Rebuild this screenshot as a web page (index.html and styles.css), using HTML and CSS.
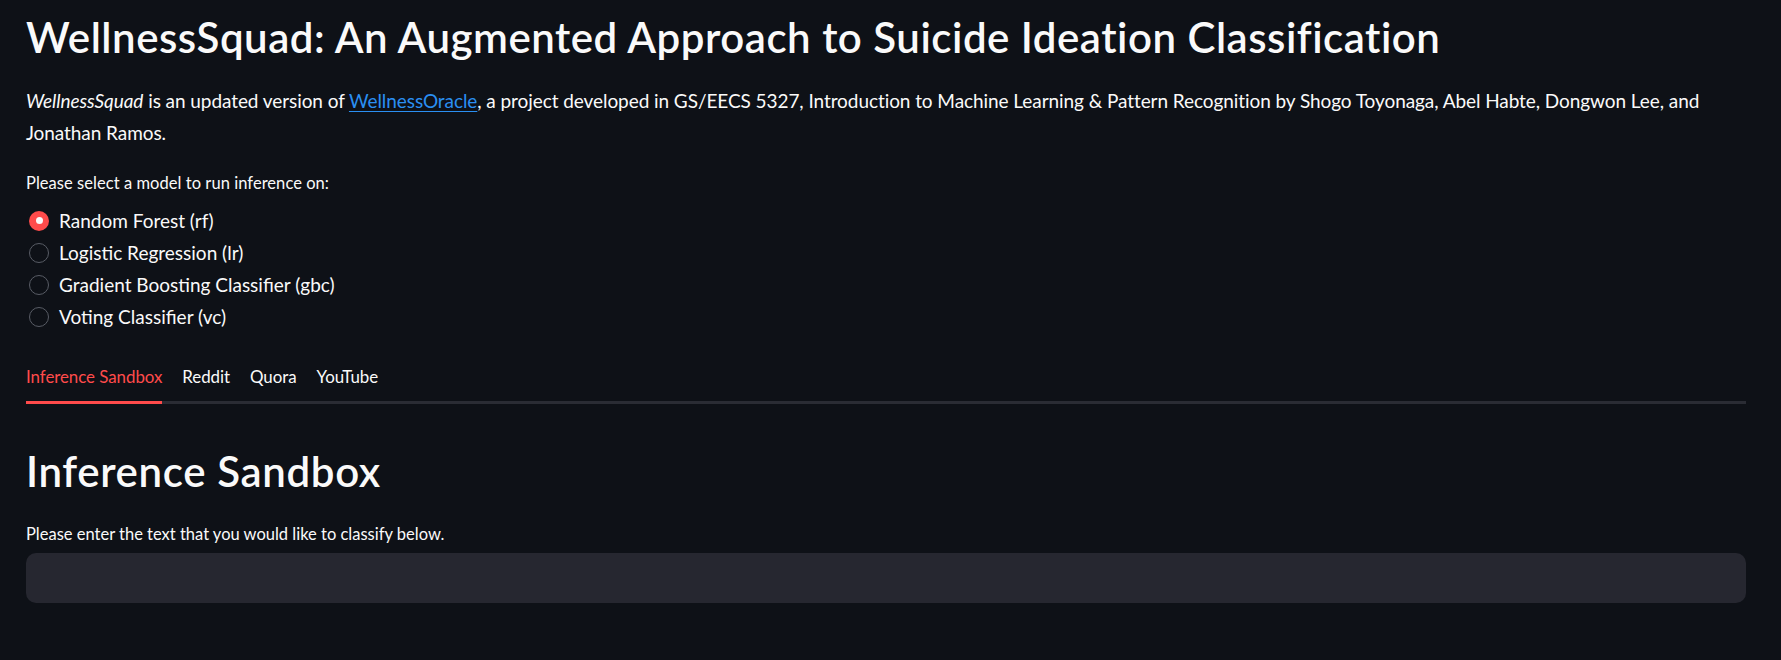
FILE: index.html
```html
<!DOCTYPE html>
<html lang="en">
<head>
<meta charset="utf-8">
<title>WellnessSquad</title>
<link rel="stylesheet" href="styles.css">
</head>
<body>
<main class="page">
  <h1 class="title">WellnessSquad: An Augmented Approach to Suicide Ideation Classification</h1>
  <p class="intro"><em>WellnessSquad</em> is an updated version of <a href="#" class="link">WellnessOracle</a>, a project developed in GS/EECS 5327, Introduction to Machine Learning &amp; Pattern Recognition by Shogo Toyonaga, Abel Habte, Dongwon Lee, and Jonathan Ramos.</p>

  <div class="field-label">Please select a model to run inference on:</div>
  <div class="radio-group">
    <div class="radio-row"><span class="radio radio-on"></span><span class="radio-text">Random Forest (rf)</span></div>
    <div class="radio-row"><span class="radio"></span><span class="radio-text">Logistic Regression (lr)</span></div>
    <div class="radio-row"><span class="radio"></span><span class="radio-text">Gradient Boosting Classifier (gbc)</span></div>
    <div class="radio-row"><span class="radio"></span><span class="radio-text">Voting Classifier (vc)</span></div>
  </div>

  <nav class="tabs">
    <span class="tab tab-active">Inference Sandbox</span>
    <span class="tab">Reddit</span>
    <span class="tab">Quora</span>
    <span class="tab">YouTube</span>
  </nav>

  <h2 class="section-title">Inference Sandbox</h2>
  <div class="field-label label-input">Please enter the text that you would like to classify below.</div>
  <div class="textarea"></div>
</main>
</body>
</html>
```
FILE: styles.css
```css
html, body {
  margin: 0;
  padding: 0;
  background: #0e1117;
}
body {
  color: #fafafa;
  font-family: Lato, "Noto Sans", sans-serif;
}
.page {
  padding: 10px 35px 0 26px;
}
.title {
  margin: 0;
  font-size: 42px;
  line-height: 54px;
  font-weight: 600;
  letter-spacing: 0.51px;
}
.intro {
  margin: 21px 0 0 0;
  font-size: 19px;
  line-height: 32px;
  letter-spacing: -0.07px;
}
.intro em {
  font-style: italic;
}
.link {
  color: #2a8ff2;
  text-decoration: underline;
  text-underline-offset: 3px;
}
.field-label {
  margin-top: 22px;
  font-size: 16.5px;
  line-height: 24px;
  letter-spacing: 0.05px;
}
.radio-group {
  margin-top: 9.5px;
  display: flex;
  flex-direction: column;
}
.radio-row {
  height: 32px;
  display: flex;
  align-items: center;
  font-size: 19px;
  line-height: 32px;
}
.radio {
  box-sizing: border-box;
  width: 20px;
  height: 20px;
  margin-left: 3px;
  margin-right: 10px;
  border-radius: 50%;
  border: 1.5px solid #585c65;
  display: flex;
  align-items: center;
  justify-content: center;
}
.radio-on {
  border: none;
  background: #ff4b4b;
}
.radio-on::before {
  content: "";
  width: 7px;
  height: 7px;
  border-radius: 50%;
  background: #fafafa;
}
.tabs {
  margin-top: 32px;
  display: flex;
  gap: 20px;
  border-bottom: 3px solid #2a2c34;
}
.tab {
  font-size: 16.9px;
  line-height: 24px;
  letter-spacing: -0.05px;
  padding: 0 0 12.6px 0;
  margin-bottom: -3px;
  border-bottom: 3px solid transparent;
}
.tab-active {
  color: #ff4b4b;
  border-bottom-color: #ff4b4b;
}
.section-title {
  margin: 39.75px 0 0 0;
  font-size: 42px;
  line-height: 54px;
  font-weight: 600;
  letter-spacing: 0.65px;
}
.label-input {
  margin-top: 24.25px;
  letter-spacing: 0;
}
.textarea {
  margin-top: 7px;
  height: 50px;
  border-radius: 10px;
  background: #262730;
}
```
